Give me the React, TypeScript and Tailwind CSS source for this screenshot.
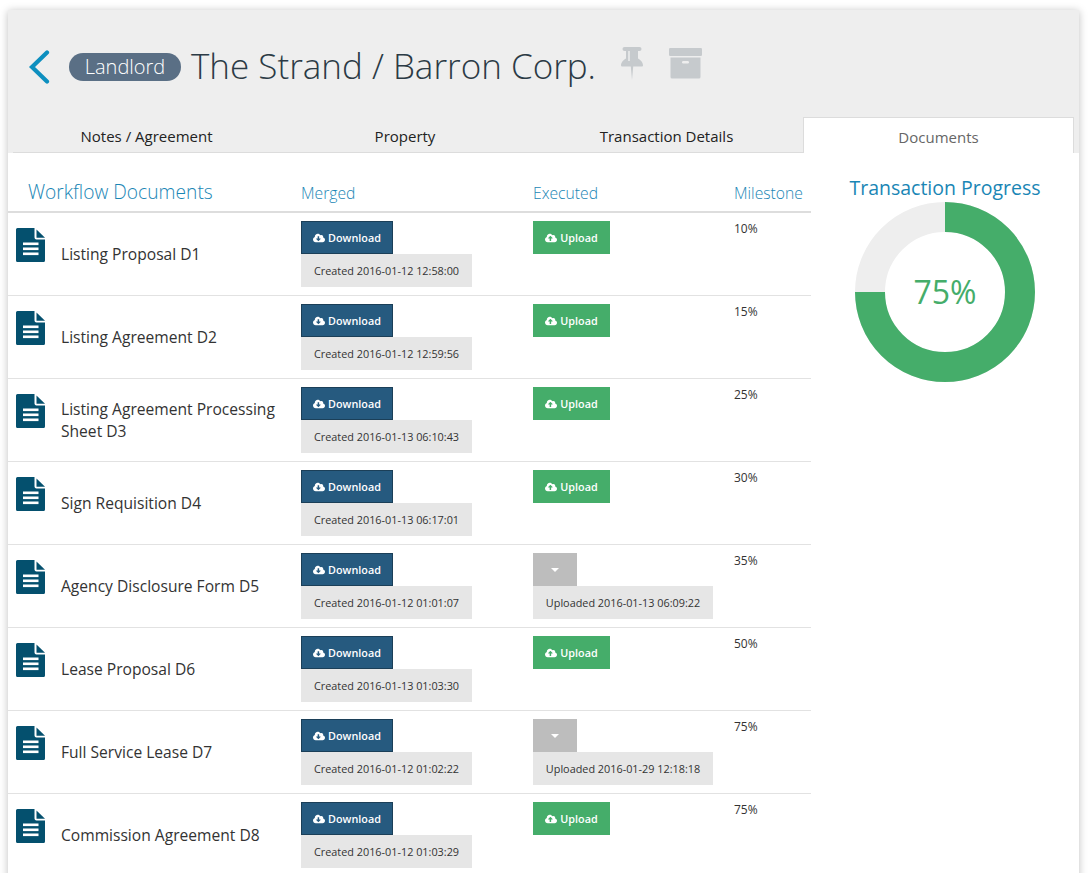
import React from 'react';
import { FaCloudDownloadAlt, FaCloudUploadAlt } from 'react-icons/fa';

const docs = [
  { name: 'Listing Proposal D1', created: '2016-01-12 12:58:00', milestone: '10%' },
  { name: 'Listing Agreement D2', created: '2016-01-12 12:59:56', milestone: '15%' },
  { name: 'Listing Agreement Processing Sheet D3', created: '2016-01-13 06:10:43', milestone: '25%' },
  { name: 'Sign Requisition D4', created: '2016-01-13 06:17:01', milestone: '30%' },
  { name: 'Agency Disclosure Form D5', created: '2016-01-12 01:01:07', milestone: '35%', uploaded: '2016-01-13 06:09:22' },
  { name: 'Lease Proposal D6', created: '2016-01-13 01:03:30', milestone: '50%' },
  { name: 'Full Service Lease D7', created: '2016-01-12 01:02:22', milestone: '75%', uploaded: '2016-01-29 12:18:18' },
  { name: 'Commission Agreement D8', created: '2016-01-12 01:03:29', milestone: '75%' },
];

function FileIcon() {
  return (
    <svg width="30" height="34" viewBox="0 0 30 34" className="shrink-0 mt-[15px]">
      <path d="M1.5 0H18.5V9.5a2 2 0 0 0 2 2H29V32.5a1.5 1.5 0 0 1-1.5 1.5H1.5A1.5 1.5 0 0 1 0 32.5V1.5A1.5 1.5 0 0 1 1.5 0Z" fill="#04506e" />
      <path d="M20.5 1.5L29 9.8H20.5Z" fill="#04506e" />
      <rect x="7" y="14.5" width="15.5" height="2.6" fill="#fff" />
      <rect x="7" y="19.5" width="15.5" height="2.6" fill="#fff" />
      <rect x="7" y="24.5" width="15.5" height="2.6" fill="#fff" />
    </svg>
  );
}

function PinIcon() {
  return (
    <svg width="22" height="33" viewBox="0 0 22 33" className="mr-[26px] mb-[6px]">
      <path d="M3.5 0H18.5a1.5 1.5 0 0 1 0 4H17V11.5C19.5 13 22 15 22 18.5a1 1 0 0 1-1 1H12.2L11 33 9.8 19.5H1a1 1 0 0 1-1-1C0 15 2.5 13 5 11.5V4H3.5a1.5 1.5 0 0 1 0-4Z" fill="#c6cacd" />
      <rect x="7" y="4" width="2" height="10" fill="#e3e5e6" />
    </svg>
  );
}

function ArchiveIcon() {
  return (
    <svg width="33" height="31" viewBox="0 0 33 31" className="mb-[7px]">
      <rect x="0" y="0" width="33" height="8" rx="1.2" fill="#c6cacd" />
      <path d="M1.5 9.5H31.5V29a1.5 1.5 0 0 1-1.5 1.5H3A1.5 1.5 0 0 1 1.5 29Z" fill="#c6cacd" />
      <rect x="13" y="13" width="7" height="2.4" rx="1.2" fill="#eeeeee" />
    </svg>
  );
}

function Row({ doc }: { doc: (typeof docs)[number] }) {
  return (
    <div className="flex h-[83px] border-b border-[#e2e2e2] pl-2">
      <FileIcon />
      <div className="w-[255px] pl-[15px] pr-4 flex items-center self-stretch pb-[1px] text-[15.6px] leading-[22px] text-[#333]">
        {doc.name}
      </div>
      <div className="w-[232px] pt-2">
        <button className="flex items-center justify-center gap-[3px] w-[92px] h-[33px] pt-px bg-[#265a7f] border border-[#1b3f58] text-white text-[10.8px] font-semibold">
          <FaCloudDownloadAlt size={12} />
          Download
        </button>
        <div className="flex items-center justify-center w-[171px] h-[33px] pt-px bg-[#e6e6e6] text-[10.85px] text-[#333]">
          Created {doc.created}
        </div>
      </div>
      <div className="w-[201px] pt-2">
        {doc.uploaded ? (
          <>
            <div className="flex items-center justify-center w-11 h-[33px] bg-[#bdbdbd]">
              <div className="w-0 h-0 border-x-4 border-t-4 border-x-transparent border-t-white" />
            </div>
            <div className="flex items-center justify-center w-[180px] h-[33px] pt-px bg-[#e6e6e6] text-[10.85px] text-[#333]">
              Uploaded {doc.uploaded}
            </div>
          </>
        ) : (
          <button className="flex items-center justify-center gap-[3px] w-[77px] h-[33px] pt-px bg-[#45ad6a] text-white text-[10.8px] font-semibold">
            <FaCloudUploadAlt size={12} />
            Upload
          </button>
        )}
      </div>
      <div className="pt-2 text-[12px] leading-4 text-[#333]">{doc.milestone}</div>
    </div>
  );
}

function Donut() {
  return (
    <div className="relative w-[180px] h-[180px] mt-px">
      <svg width="180" height="180" viewBox="0 0 180 180">
        <circle cx="90" cy="90" r="75" fill="none" stroke="#eeeeee" strokeWidth="30" />
        <path d="M90 15A75 75 0 1 1 15 90" fill="none" stroke="#45ad6a" strokeWidth="30" />
      </svg>
      <div className="absolute inset-0 flex items-center justify-center text-[32px] text-[#45ad6a]">75%</div>
    </div>
  );
}

export default function App() {
  return (
    <div className="h-[873px] overflow-hidden bg-white pt-[10px] pl-2 pr-[10px]" style={{ fontFamily: '"Open Sans", sans-serif' }}>
      <div className="h-[900px] bg-white shadow-[0_1px_8px_rgba(0,0,0,0.25)]">
        <div className="bg-[#eeeeee] h-[143px] flex flex-col">
          <div className="flex items-center h-[107px] pl-5 pt-[6px]">
            <svg width="22" height="34" viewBox="0 0 22 34" className="mr-[19px]">
              <path d="M19 2.5L4 17L19 31.5" fill="none" stroke="#0d8fbf" strokeWidth="4.2" strokeLinecap="round" />
            </svg>
            <span className="flex items-center justify-center w-[112px] h-[28px] rounded-full bg-[#5a6f85] text-white text-[20px] font-light">
              Landlord
            </span>
            <h1 className="ml-[10px] mr-[25px] text-[35px] font-light text-[#2b3a45] whitespace-nowrap">The Strand / Barron Corp.</h1>
            <PinIcon />
            <ArchiveIcon />
          </div>
          <div className="flex h-[36px] pl-[5px] pr-[5px] text-[15px] text-[#222]">
            <div className="w-[267px] pt-1 flex items-center justify-center border-b border-[#dcdcdc]">Notes / Agreement</div>
            <div className="w-[250px] pt-1 flex items-center justify-center border-b border-[#dcdcdc]">Property</div>
            <div className="w-[273px] pt-1 flex items-center justify-center border-b border-[#dcdcdc]">Transaction Details</div>
            <div className="flex-1 pt-1 flex items-center justify-center bg-white border border-b-0 border-[#dcdcdc] text-[#666]">Documents</div>
          </div>
        </div>
        <div className="flex">
          <div className="w-[803px] shrink-0">
            <div className="flex items-end h-[60px] pb-[5px] border-b-2 border-[#dddddd] text-[#1a86b5] font-light">
              <div className="w-[293px] pl-5 text-[19.2px] leading-[28px]">Workflow Documents</div>
              <div className="w-[232px] text-[15.7px]">Merged</div>
              <div className="w-[201px] text-[15.7px]">Executed</div>
              <div className="text-[15.7px] whitespace-nowrap">Milestone</div>
            </div>
            {docs.map((doc) => (
              <Row key={doc.name} doc={doc} />
            ))}
          </div>
          <div className="flex-1 flex flex-col items-center pt-[22px]">
            <div className="text-[19.5px] leading-[26px] text-[#1a86b5] whitespace-nowrap">Transaction Progress</div>
            <Donut />
          </div>
        </div>
      </div>
    </div>
  );
}
